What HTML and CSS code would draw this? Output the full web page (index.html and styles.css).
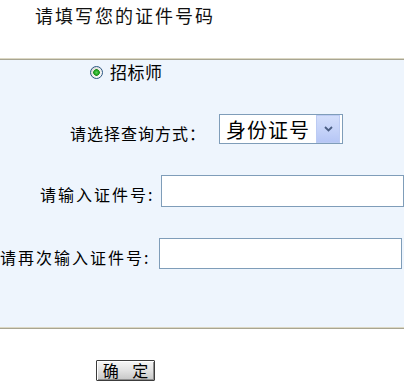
FILE: index.html
```html
<!DOCTYPE html>
<html lang="zh-CN">
<head>
<meta charset="utf-8">
<title>请填写您的证件号码</title>
<link rel="stylesheet" href="styles.css">
</head>
<body>
<div class="header">
  <h1 class="title">请填写您的证件号码</h1>
</div>
<div class="rule"></div>
<form class="panel">
  <div class="row radio-row">
    <input class="radio" type="radio" name="role" id="r1" checked>
    <label class="radio-label" for="r1">招标师</label>
  </div>
  <div class="row select-row">
    <span class="label label-select">请选择查询方式：</span>
    <div class="select-wrap">
      <select class="select">
        <option>身份证号</option>
      </select>
      <span class="arrow">
        <svg width="9" height="6" viewBox="0 0 9 6"><path d="M1 1 L4.5 4.5 L8 1" fill="none" stroke="#4a5d82" stroke-width="1.8"/></svg>
      </span>
    </div>
  </div>
  <div class="row input-row first">
    <span class="label label-id">请输入证件号:</span>
    <input class="field field-a" type="text">
  </div>
  <div class="row input-row second">
    <span class="label label-again">请再次输入证件号:</span>
    <input class="field field-b" type="text">
  </div>
</form>
<div class="rule"></div>
<div class="actions">
  <button class="btn" type="button">确 定</button>
</div>
</body>
</html>
```
FILE: styles.css
```css
html, body {
  margin: 0;
  padding: 0;
  background: #ffffff;
  font-family: "Noto Sans CJK SC", "Liberation Sans", sans-serif;
  color: #000;
  width: 404px;
  overflow: hidden;
}

.header {
  height: 58px;
  box-sizing: border-box;
  padding: 6px 0 0 35px;
}

.title {
  margin: 0;
  font-size: 18px;
  line-height: 18px;
  font-weight: normal;
  letter-spacing: 2px;
  color: #111;
}

.rule {
  height: 0;
  border-top: 1px solid #dcd8c4;
  border-bottom: 1px solid #a8a592;
}

.panel {
  margin: 0;
  height: 267px;
  box-sizing: border-box;
  background: #eef5fd;
  padding-top: 2px;
  display: flex;
  flex-direction: column;
}

.row {
  display: flex;
  align-items: flex-start;
}

.radio-row {
  height: 20px;
  align-items: center;
  padding-left: 90px;
}

.radio {
  appearance: none;
  -webkit-appearance: none;
  margin: 0;
  width: 13px;
  height: 13px;
  box-sizing: border-box;
  border: 1px solid #2a5582;
  border-radius: 50%;
  background:
    radial-gradient(circle at 50% 50%, #5ad35a 0, #22a622 2.2px, #1d8f1d 3px, rgba(0,0,0,0) 3.6px),
    linear-gradient(135deg, #d8d8d2, #ffffff);
}

.radio-label {
  margin-left: 7px;
  font-size: 17px;
  line-height: 20px;
  letter-spacing: 0.5px;
}

.label {
  font-size: 16px;
  line-height: 16px;
  padding-top: 11px;
  white-space: nowrap;
  letter-spacing: 2px;
}

.select-row {
  margin-top: 32px;
  padding-left: 70px;
}

.label-select {
  width: 149px;
  letter-spacing: 1px;
}

.select-wrap {
  position: relative;
  width: 124px;
  height: 30px;
}

.select {
  appearance: none;
  -webkit-appearance: none;
  width: 124px;
  height: 30px;
  box-sizing: border-box;
  border: 1px solid #7f9db9;
  border-radius: 0;
  background: #ffffff;
  padding: 0 0 0 6px;
  margin: 0;
  font-family: "Noto Sans CJK SC", "Liberation Sans", sans-serif;
  font-size: 20px;
  letter-spacing: 1px;
  color: #000;
}

.arrow {
  position: absolute;
  top: 1px;
  right: 3px;
  width: 24px;
  height: 28px;
  box-sizing: border-box;
  border: 1px solid #bccbf3;
  background: linear-gradient(180deg, #d3defb 0%, #c3d1f8 60%, #b6c6f5 100%);
  display: flex;
  align-items: center;
  justify-content: center;
  pointer-events: none;
}

.input-row.first {
  margin-top: 31px;
  padding-left: 40px;
}

.label-id {
  width: 121px;
}

.input-row.second {
  margin-top: 31px;
}

.label-again {
  width: 159px;
}

.field {
  margin: 0;
  width: 243px;
  box-sizing: border-box;
  border: 1px solid #7f9db9;
  background: #ffffff;
  padding: 0 4px;
  font-size: 16px;
}

.field-a {
  height: 32px;
}

.field-b {
  height: 31px;
}

.actions {
  padding: 29px 0 0 96px;
}

.btn {
  margin: 0;
  width: 59px;
  height: 21px;
  box-sizing: border-box;
  padding: 0;
  border: 1px solid #3c3c3c;
  border-radius: 1px;
  background: linear-gradient(180deg, #f6f6f6 0%, #e2e2e2 50%, #c6c6c6 100%);
  box-shadow: inset 1px 1px 0 #ffffff, inset -1px -1px 0 #8e8e8e;
  font-family: "Noto Sans CJK SC", "Liberation Sans", sans-serif;
  font-size: 16px;
  line-height: 19px;
  word-spacing: 10px;
  color: #000;
}
```
